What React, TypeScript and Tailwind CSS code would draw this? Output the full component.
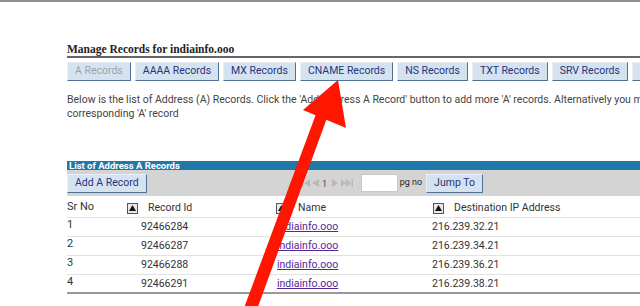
const tabs = ["A Records", "AAAA Records", "MX Records", "CNAME Records", "NS Records", "TXT Records", "SRV Records", "SOA Records"];

const rows = [
  { sr: "1", id: "92466284", name: "indiainfo.ooo", ip: "216.239.32.21" },
  { sr: "2", id: "92466287", name: "indiainfo.ooo", ip: "216.239.34.21" },
  { sr: "3", id: "92466288", name: "indiainfo.ooo", ip: "216.239.36.21" },
  { sr: "4", id: "92466291", name: "indiainfo.ooo", ip: "216.239.38.21" },
];

function SortIcon() {
  return (
    <span className="inline-flex h-[11px] w-[11px] shrink-0 items-center justify-center border border-[#555] bg-[#e8e8e8]">
      <svg width="7" height="6" viewBox="0 0 7 6">
        <polygon points="3.5,0 7,6 0,6" fill="#111" />
      </svg>
    </span>
  );
}

function Btn({ children, disabled, tab }: { children: React.ReactNode; disabled?: boolean; tab?: boolean }) {
  return (
    <button
      className={
        "h-[19px] shrink-0 whitespace-nowrap border border-t-[#e9f0f7] border-l-[#e9f0f7] border-b-[#4f6f94] border-r-[#4f6f94] bg-[#d5e3f0] text-[10.5px] leading-none " +
        (tab ? "px-[7px] " : "px-[6px] ") +
        (disabled ? "text-[#9aa3ad]" : "text-[#27347a]")
      }
    >
      {children}
    </button>
  );
}

export default function App() {
  return (
    <div className="relative h-[306px] w-[640px] overflow-hidden bg-white font-['Roboto',sans-serif]">
      <div className="h-[2px] bg-[#8b9099]" />

      <div className="pl-[67px] pt-[40px]">
        {/* title */}
        <div className="border-b-2 border-[#666] font-['Liberation_Serif',serif] text-[11.5px] font-bold leading-[14px] text-[#222]">
          Manage Records for indiainfo.ooo
        </div>

        {/* record type tabs */}
        <div className="mt-[4px] flex gap-[4px]">
          {tabs.map((t, i) => (
            <Btn key={t} disabled={i === 0} tab>
              {t}
            </Btn>
          ))}
        </div>

        <p className="mt-[12px] whitespace-nowrap text-[10.5px] leading-[14px] text-[#444]">
          Below is the list of Address (A) Records. Click the 'Add Address A Record' button to add more 'A' records. Alternatively you may edit or delete the
          <br />
          corresponding 'A' record
        </p>

        {/* table */}
        <div className="mt-[40px]">
          <div className="h-[9px] bg-[#1f78a8] pl-[2px] text-[9.5px] font-bold leading-[9px] text-white">List of Address A Records</div>
          <div className="flex h-[26px] items-center bg-[#d4d4d4]">
            <Btn>
              <span className="px-[1px]">Add A Record</span>
            </Btn>
            <div className="ml-[155px] flex items-center">
              <svg width="54" height="10" viewBox="0 0 54 10">
                <rect x="0" y="1" width="1.5" height="8" fill="#b8b8b8" />
                <polygon points="2,5 8,1 8,9" fill="#b8b8b8" />
                <polygon points="10,5 17,1 17,9" fill="#b8b8b8" />
                <text x="20" y="9" fontSize="9" fill="#444" fontFamily="Roboto">1</text>
                <polygon points="30,1 36,5 30,9" fill="#b8b8b8" />
                <polygon points="39,1 44,5 39,9" fill="#b8b8b8" />
                <polygon points="44,1 49,5 44,9" fill="#b8b8b8" />
                <rect x="49.5" y="1" width="1.5" height="8" fill="#b8b8b8" />
              </svg>
              <div className="ml-[5px] h-[18px] w-[37px] border border-[#c8c8c8] bg-white" />
              <span className="ml-[2px] text-[9px] text-[#222]">pg no</span>
              <span className="ml-[4px] flex">
                <Btn>
                  <span className="px-[1px]">Jump To</span>
                </Btn>
              </span>
            </div>
          </div>

          <div className="grid h-[22px] grid-cols-[60px_149px_155px_1fr] items-center border-b border-[#e2e2e2] pt-[3px] text-[10.5px] text-[#333]">
            <span className="-mt-[2px] text-[11px]">Sr No</span>
            <span className="flex items-center gap-[10px]">
              <SortIcon />
              Record Id
            </span>
            <span className="flex items-center gap-[11px]">
              <SortIcon />
              Name
            </span>
            <span className="flex items-center gap-[10px] pl-[2px]">
              <SortIcon />
              Destination IP Address
            </span>
          </div>

          {rows.map((r, i) => (
            <div
              key={r.id}
              className={
                "grid h-[19px] grid-cols-[60px_149px_155px_1fr] items-center text-[10.5px] text-[#333] " +
                (i === rows.length - 1 ? "border-b-2 border-[#999]" : "border-b border-[#e2e2e2]")
              }
            >
              <span className="-mt-[3px] text-[11px]">{r.sr}</span>
              <span className="pl-[14px]">{r.id}</span>
              <a className="pl-[1px] text-[#55289a] underline">{r.name}</a>
              <span className="pl-[1px]">{r.ip}</span>
            </div>
          ))}
        </div>
      </div>

      {/* red arrow annotation */}
      <svg className="pointer-events-none absolute inset-0" width="640" height="306" viewBox="0 0 640 306">
        <polygon points="244,308 256,312 327,118 316,114" fill="#ff1500" />
        <polygon points="338,80 346,128 303,110" fill="#ff1500" />
      </svg>
    </div>
  );
}
